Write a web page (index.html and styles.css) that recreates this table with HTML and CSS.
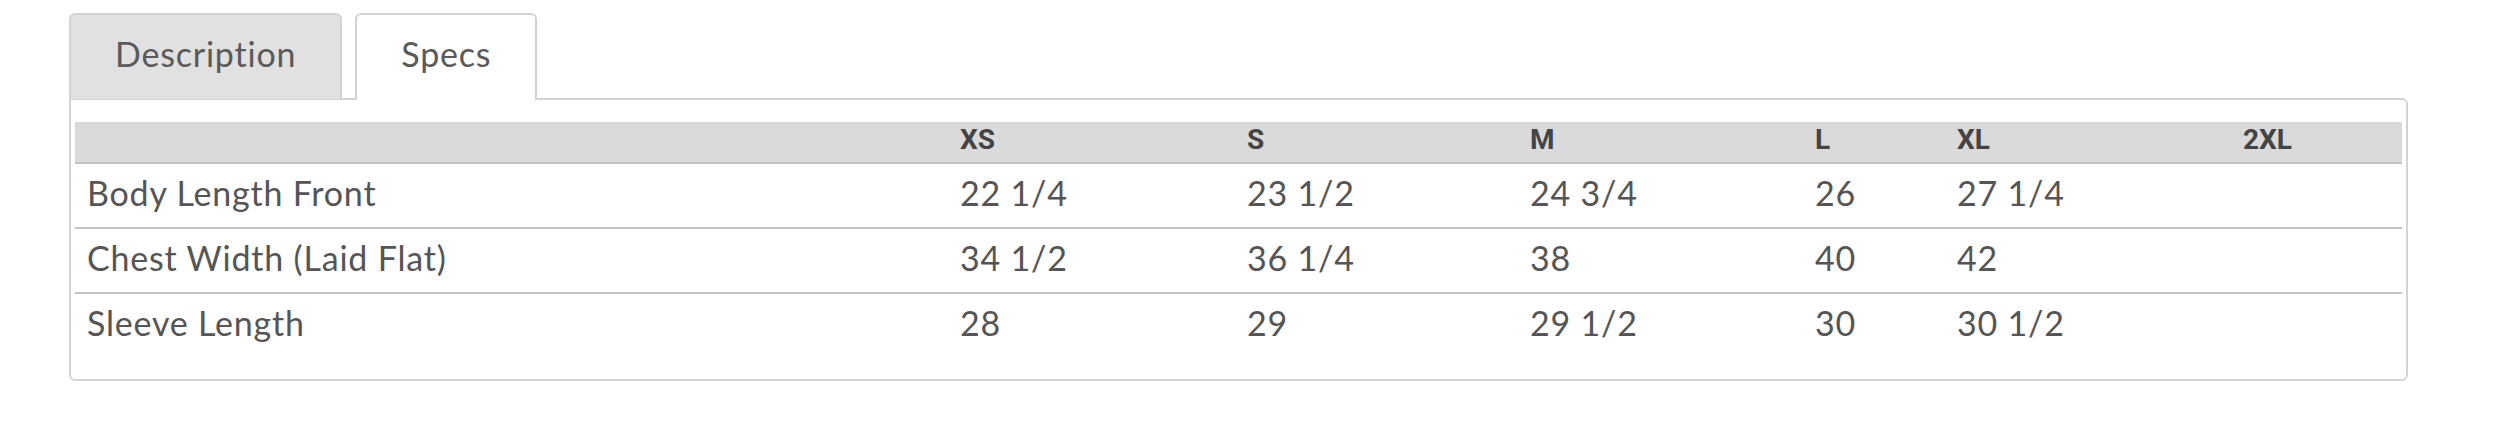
FILE: index.html
```html
<!DOCTYPE html>
<html>
<head>
<meta charset="utf-8">
<link rel="stylesheet" href="styles.css">
</head>
<body>
<div class="product-tabs">
  <div class="tab-bar">
    <div class="tab">Description</div>
    <div class="tab active">Specs</div>
  </div>
  <div class="panel">
    <table class="specs">
      <colgroup>
        <col class="c-label"><col class="c-xs"><col class="c-s"><col class="c-m"><col class="c-l"><col class="c-xl"><col class="c-2xl">
      </colgroup>
      <thead>
        <tr><th></th><th>XS</th><th>S</th><th>M</th><th>L</th><th>XL</th><th>2XL</th></tr>
      </thead>
      <tbody>
        <tr><td>Body Length Front</td><td>22 1/4</td><td>23 1/2</td><td>24 3/4</td><td>26</td><td>27 1/4</td><td></td></tr>
        <tr><td>Chest Width (Laid Flat)</td><td>34 1/2</td><td>36 1/4</td><td>38</td><td>40</td><td>42</td><td></td></tr>
        <tr><td>Sleeve Length</td><td>28</td><td>29</td><td>29 1/2</td><td>30</td><td>30 1/2</td><td></td></tr>
      </tbody>
    </table>
  </div>
</div>
</body>
</html>
```

FILE: styles.css
```css
html, body {
  margin: 0;
  padding: 0;
  background: #ffffff;
}

body {
  font-family: "Lato", "Open Sans", sans-serif;
  color: #555555;
}

.product-tabs {
  width: 2339px;
  margin: 13px 0 0 69px;
}

.tab-bar {
  display: flex;
  gap: 13px;
  height: 85px;
}

.tab {
  box-sizing: border-box;
  height: 86px;
  padding: 0 44px 8px;
  display: flex;
  align-items: center;
  font-size: 34px;
  letter-spacing: 0.8px;
  color: #5a5a5a;
  background: #e1e1e1;
  border: 2px solid #d2d2d2;
  border-bottom: none;
  border-radius: 6px 6px 0 0;
}

.tab.active {
  background: #ffffff;
  position: relative;
  z-index: 1;
  height: 87px;
}

.panel {
  box-sizing: border-box;
  border: 2px solid #d4d4d4;
  border-radius: 0 6px 6px 6px;
  padding: 22px 4px 22px 4px;
  height: 283px;
}

.specs {
  width: 2327px;
  border-collapse: collapse;
  table-layout: fixed;
}

.c-label { width: 873px; }
.c-xs { width: 287px; }
.c-s { width: 283px; }
.c-m { width: 285px; }
.c-l { width: 142px; }
.c-xl { width: 286px; }
.c-2xl { width: 171px; }

.specs th {
  box-sizing: border-box;
  background: #dadada;
  height: 41px;
  padding: 0 12px 4px;
  text-align: left;
  font-family: "Roboto", "Liberation Sans", sans-serif;
  font-weight: 700;
  font-size: 28px;
  color: #444444;
  border-bottom: 2px solid #c2c2c2;
  vertical-align: middle;
  line-height: 1;
}

.specs td {
  box-sizing: border-box;
  height: 65px;
  padding: 0 12px 6px;
  font-size: 34px;
  letter-spacing: 0.8px;
  color: #555555;
  border-bottom: 2px solid #c4c4c4;
  vertical-align: middle;
  line-height: 1;
  white-space: nowrap;
}

.specs tbody tr:last-child td {
  border-bottom: none;
}
```
